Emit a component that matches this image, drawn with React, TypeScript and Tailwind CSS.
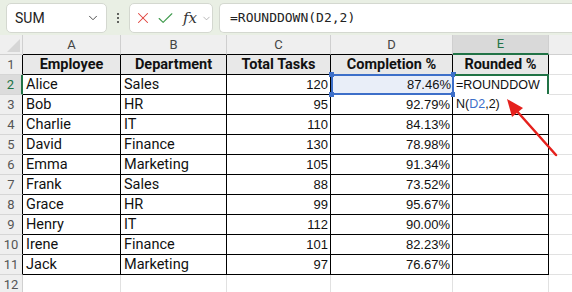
import { X, Check, ChevronDown } from 'lucide-react';

const COLS = ['A', 'B', 'C', 'D', 'E'];
const WIDTHS = ['w-[98px]', 'w-[106px]', 'w-[104px]', 'w-[122px]', 'w-[96px]'];

const ROWS: [string, string, string, string][] = [
  ['Alice', 'Sales', '120', '87.46%'],
  ['Bob', 'HR', '95', '92.79%'],
  ['Charlie', 'IT', '110', '84.13%'],
  ['David', 'Finance', '130', '78.98%'],
  ['Emma', 'Marketing', '105', '91.34%'],
  ['Frank', 'Sales', '88', '73.52%'],
  ['Grace', 'HR', '99', '95.67%'],
  ['Henry', 'IT', '112', '90.00%'],
  ['Irene', 'Finance', '101', '82.23%'],
  ['Jack', 'Marketing', '97', '76.67%'],
];

const HEADERS = ['Employee', 'Department', 'Total Tasks', 'Completion %', 'Rounded %'];

const txt = "font-['Roboto',sans-serif] text-[14.5px] text-[#111]";
const num = "font-['Liberation_Sans',Arial,sans-serif] text-[13px] text-[#111]";

function Toolbar() {
  return (
    <div className="flex h-[35px] items-start bg-[#e9efe4] pl-[6px] pt-[3px]">
      <div className="flex h-[30px] w-[101px] items-center justify-between rounded-[5px] border border-[#d4d8d0] bg-white pl-[8px] pr-[6px]">
        <span className="font-['Roboto',sans-serif] text-[14px] text-[#222]">SUM</span>
        <ChevronDown size={14} strokeWidth={1.6} className="text-[#444]" />
      </div>
      <div className="flex h-[30px] w-[22px] flex-col items-center justify-center gap-[2px]">
        <span className="h-[2px] w-[2px] rounded-full bg-[#333]" />
        <span className="h-[2px] w-[2px] rounded-full bg-[#333]" />
        <span className="h-[2px] w-[2px] rounded-full bg-[#333]" />
      </div>
      <div className="flex h-[30px] w-[84px] items-center rounded-[5px] border border-[#d4d8d0] bg-white pl-[4px]">
        <X size={18} strokeWidth={1.4} className="text-[#e0403a]" />
        <Check size={19} strokeWidth={1.4} className="ml-[4px] text-[#3f9a4c]" />
        <span className="ml-[8px] font-['DejaVu_Serif',serif] text-[15px] italic leading-none text-[#333]">fx</span>
        <ChevronDown size={11} strokeWidth={1.5} className="ml-[4px] text-[#999]" />
      </div>
      <div className="ml-[6px] flex h-[30px] flex-1 items-center rounded-l-[5px] border border-r-0 border-[#d4d8d0] bg-white pl-[10px]">
        <span className="font-['DejaVu_Sans_Mono',monospace] text-[13px] text-[#222]">=ROUNDDOWN(D2,2)</span>
      </div>
    </div>
  );
}

function ColumnHeaders() {
  return (
    <div className="flex h-[20px]">
      <div className="relative h-[20px] w-[23px] border-r border-b border-[#d0d0d0] bg-[#efefef]">
        <svg className="absolute bottom-[2px] right-[2px]" width="13" height="13" viewBox="0 0 13 13">
          <polygon points="13,0 13,13 0,13" fill="#d6d6d6" />
        </svg>
      </div>
      {COLS.map((c, i) => (
        <div
          key={c}
          className={`${WIDTHS[i]} flex h-[20px] items-center justify-center border-r border-[#cfcfcf] ${
            c === 'E'
              ? 'border-b-2 border-b-[#217346] bg-[#d9d9d9] text-[#217346]'
              : 'border-b border-b-black bg-[#efefef] text-[#444]'
          } font-['Roboto',sans-serif] text-[13px]`}
        >
          {c}
        </div>
      ))}
      <div className="h-[20px] flex-1 border-b border-[#d0d0d0] bg-[#efefef]" />
    </div>
  );
}

function RowHeader({ n }: { n: number }) {
  const active = n === 2;
  const edge = n === 12 ? 'border-r-[#d0d0d0]' : active ? 'border-r-2 border-r-[#217346]' : 'border-r-black';
  return (
    <div
      className={`flex h-[20px] w-[23px] items-center justify-center border-r border-b border-b-[#d6d6d6] ${edge} ${
        active ? 'bg-[#dcdcdc] text-[#217346]' : 'bg-[#efefef] text-[#555]'
      } font-['Roboto',sans-serif] text-[13px]`}
    >
      {n}
    </div>
  );
}

function Sheet() {
  return (
    <div className="relative">
      <ColumnHeaders />
      <div className="flex h-[20px]">
        <RowHeader n={1} />
        {HEADERS.map((h, i) => (
          <div
            key={h}
            className={`${WIDTHS[i]} flex h-[20px] items-center justify-center border-r border-b border-black bg-[#e8e8e8] ${txt} font-bold`}
          >
            {h}
          </div>
        ))}
        <div className="h-[20px] flex-1 border-b border-[#e1e1e1]" />
      </div>
      {ROWS.map((r, idx) => (
        <div key={r[0]} className="flex h-[20px]">
          <RowHeader n={idx + 2} />
          <div className={`${WIDTHS[0]} flex h-[20px] items-center border-r border-b border-black pl-[3px] ${txt}`}>{r[0]}</div>
          <div className={`${WIDTHS[1]} flex h-[20px] items-center border-r border-b border-black pl-[3px] ${txt}`}>{r[1]}</div>
          <div className={`${WIDTHS[2]} flex h-[20px] items-center justify-end border-r border-b border-black pr-[2px] ${num}`}>{r[2]}</div>
          <div className={`${WIDTHS[3]} flex h-[20px] items-center justify-end border-r border-b border-black pr-[2px] ${num}`}>
            {idx === 0 ? '' : r[3]}
          </div>
          <div className={`${WIDTHS[4]} h-[20px] border-r border-b border-black`} />
          <div className="h-[20px] flex-1 border-b border-[#e1e1e1]" />
        </div>
      ))}
      <div className="flex h-[20px]">
        <RowHeader n={12} />
        {COLS.map((c, i) => (
          <div key={c} className={`${WIDTHS[i]} h-[20px] border-r border-b border-[#e1e1e1]`} />
        ))}
        <div className="h-[20px] flex-1 border-b border-[#e1e1e1]" />
      </div>

      {/* D2 reference highlight */}
      <div className="absolute left-[331px] top-[39px] h-[21px] w-[123px] border-2 border-[#3d6fc9] bg-[#e9eef8]">
        <div className="absolute -left-[4px] -top-[4px] h-[5px] w-[5px] bg-[#3d6fc9]" />
        <div className="absolute -right-[4px] -top-[4px] h-[5px] w-[5px] bg-[#3d6fc9]" />
        <div className="absolute -left-[4px] -bottom-[4px] h-[5px] w-[5px] bg-[#3d6fc9]" />
        <div className="absolute -right-[4px] -bottom-[4px] h-[5px] w-[5px] bg-[#3d6fc9]" />
        <div className="flex h-full items-center justify-end pr-[1px]">
          <span className={num}>87.46%</span>
        </div>
      </div>

      {/* E2 in-cell editor */}
      <div className="absolute left-[455px] top-[39px] h-[40px] w-[94px] bg-white">
        <div className="h-[2px] w-full bg-[#217346]" />
        <div className="absolute right-0 top-0 h-[20px] w-[2px] bg-[#217346]" />
        <div className="flex h-[18px] items-center pl-[1px] font-['Liberation_Sans',Arial,sans-serif] text-[12.5px] leading-none text-[#111]">
          =ROUNDDOW
        </div>
        <div className="flex h-[20px] items-center pl-[1px] font-['Liberation_Sans',Arial,sans-serif] text-[12.5px] leading-none text-[#111]">
          N(<span className="text-[#3d6fc9]">D2</span>,2)
        </div>
      </div>

      {/* annotation arrow */}
      <svg className="pointer-events-none absolute left-0 top-0" width="572" height="257" viewBox="0 35 572 257">
        <line x1="556" y1="155" x2="515" y2="109" stroke="#e5211d" strokeWidth="2.5" strokeLinecap="round" />
        <polygon points="507,99 523,108 512,117" fill="#e5211d" />
      </svg>
    </div>
  );
}

export default function App() {
  return (
    <div className="h-[292px] w-[572px] overflow-hidden bg-white">
      <Toolbar />
      <Sheet />
    </div>
  );
}
